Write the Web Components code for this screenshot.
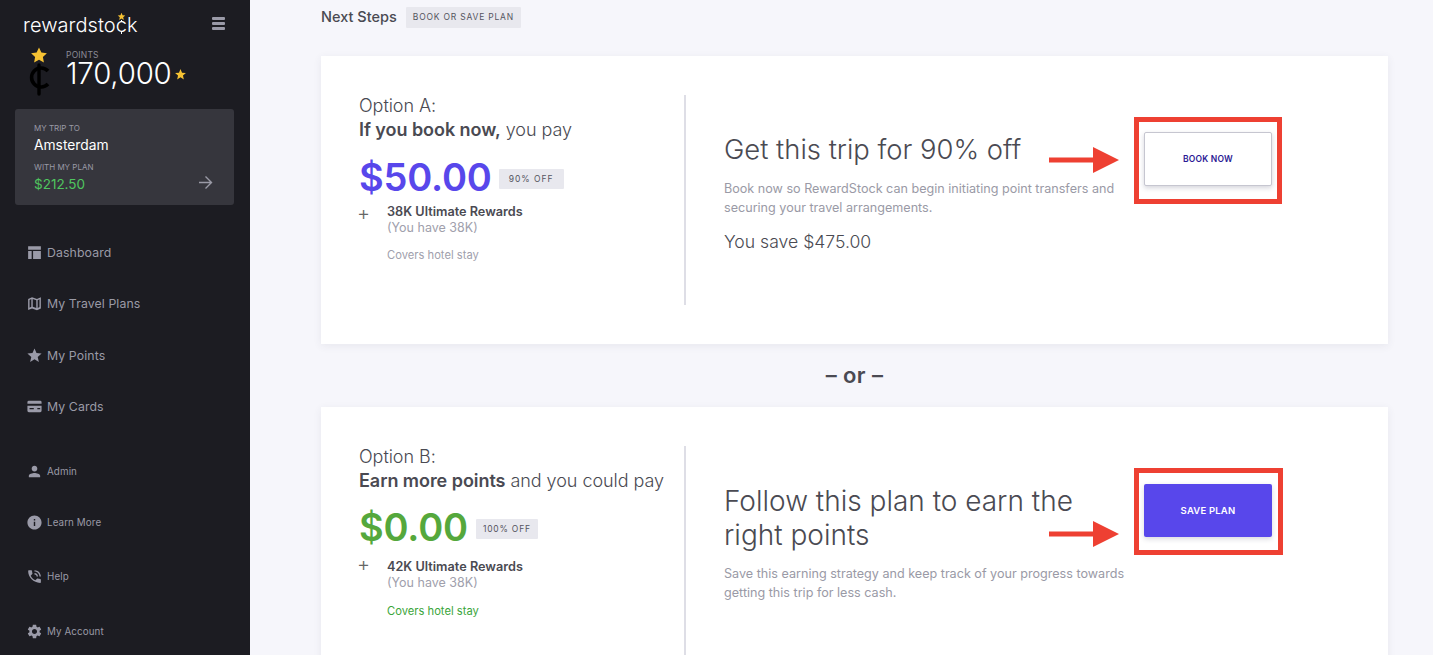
<!DOCTYPE html>
<html lang="en"><head><meta charset="utf-8"><title>RewardStock</title>
<style>
html,body{margin:0;padding:0;height:655px;overflow:hidden;background:#f6f6fb;font-family:Inter,"Noto Sans",sans-serif;}
</style></head><body>
<app-shell>
  <side-bar slot="side"></side-bar>
  <next-steps></next-steps>
  <option-card price="$50.00" off="90% OFF" tone="a" option="Option A:" lead="If you book now," rest=" you pay"
    reward="38K Ultimate Rewards" have="(You have 38K)" cover="Covers hotel stay"
    title-text="Get this trip for 90% off" desc="Book now so RewardStock can begin initiating point transfers and securing your travel arrangements."
    save="You save $475.00" cta="BOOK NOW"></option-card>
  <or-divider></or-divider>
  <option-card price="$0.00" off="100% OFF" tone="b" option="Option B:" lead="Earn more points" rest=" and you could pay"
    reward="42K Ultimate Rewards" have="(You have 38K)" cover="Covers hotel stay"
    title-text="Follow this plan to earn the right points" desc="Save this earning strategy and keep track of your progress towards getting this trip for less cash."
    cta="SAVE PLAN"></option-card>
</app-shell>
<script>
const STAR='M12 17.27L18.18 21l-1.64-7.03L22 9.24l-7.19-.61L12 2 9.19 8.63 2 9.24l5.46 4.73L5.82 21z';
const ICONS={
 dash:'<path d="M3 3h18v5H3zM3 10h5v11H3zM10 10h11v11H10z"/>',
 map:'<path fill-rule="evenodd" d="M3 5.500 8.500 3l7 2.500L21 3v16l-5.500 2.500-7-2.500L3 21zM5 7v11l2.500-1.300V5.700zM9.500 5.700v11l5 1.700V7.300zM16.500 7.300v11L19 17V6z"/>',
 star:`<path d="${STAR}"/>`,
 card:'<path fill-rule="evenodd" d="M4 4h16a2 2 0 0 1 2 2v2H2V6a2 2 0 0 1 2-2zM2 11h20v7a2 2 0 0 1-2 2H4a2 2 0 0 1-2-2zM5 14v2h6v-2zM16 14v2h4v-2z"/>',
 person:'<path d="M12 12c2.210 0 4-1.790 4-4s-1.790-4-4-4-4 1.790-4 4 1.790 4 4 4zm0 2c-2.670 0-8 1.340-8 4v2h16v-2c0-2.660-5.330-4-8-4z"/>',
 info:'<path d="M12 2C6.480 2 2 6.480 2 12s4.480 10 10 10 10-4.480 10-10S17.520 2 12 2zm1 15h-2v-6h2v6zm0-8h-2V7h2v2z"/>',
 phone:'<path d="M20 15.500c-1.250 0-2.450-.2-3.570-.57-.35-.11-.74-.03-1.020.24l-2.200 2.200c-2.830-1.440-5.150-3.750-6.590-6.590l2.200-2.210c.28-.26.36-.65.25-1C8.700 6.450 8.500 5.250 8.500 4c0-.55-.45-1-1-1H4c-.55 0-1 .45-1 1 0 9.390 7.610 17 17 17 .55 0 1-.45 1-1v-3.500c0-.55-.45-1-1-1zM19 12h2c0-4.970-4.030-9-9-9v2c3.870 0 7 3.130 7 7zm-4 0h2c0-2.760-2.240-5-5-5v2c1.660 0 3 1.340 3 3z"/>',
 gear:'<path d="M19.140 12.940c.04-.3.06-.61.06-.94 0-.32-.02-.64-.07-.94l2.030-1.580c.18-.14.23-.41.12-.61l-1.920-3.320c-.12-.22-.37-.29-.59-.22l-2.390.96c-.5-.38-1.030-.7-1.620-.94l-.36-2.540c-.04-.24-.24-.41-.48-.41h-3.840c-.24 0-.43.17-.47.41l-.36 2.540c-.59.24-1.130.57-1.620.94l-2.390-.96c-.22-.08-.47 0-.59.22L2.740 8.870c-.12.21-.08.47.12.61l2.030 1.580c-.05.3-.09.63-.09.94s.02.64.07.94l-2.030 1.580c-.18.14-.23.41-.12.61l1.920 3.320c.12.22.37.29.59.22l2.390-.96c.5.38 1.030.7 1.620.94l.36 2.540c.05.24.24.41.48.41h3.840c.24 0 .44-.17.47-.41l.36-2.540c.59-.24 1.130-.56 1.620-.94l2.390.96c.22.08.47 0 .59-.22l1.920-3.320c.12-.22.07-.47-.12-.61l-2.010-1.580zM12 15.600c-1.980 0-3.600-1.620-3.600-3.600s1.620-3.600 3.600-3.600 3.600 1.620 3.600 3.600-1.620 3.600-3.600 3.600z"/>'
};
function def(name,html){customElements.define(name,class extends HTMLElement{
  constructor(){super();this.attachShadow({mode:'open'});}
  connectedCallback(){this.shadowRoot.innerHTML=typeof html==='function'?html(this):html;}
});}
def('app-shell',`<style>
:host{display:flex;width:1433px;height:655px;overflow:hidden}
.side{flex:0 0 250px}
.main{flex:1;padding:0 45px 0 71px;min-width:0}
</style><div class="side"><slot name="side"></slot></div><div class="main"><slot></slot></div>`);

def('nav-item',h=>`<style>
:host{display:flex;align-items:center;gap:4px;color:#9a9aa6;font-size:var(--fs,12.300px);height:20px;letter-spacing:.1px}
svg{width:17px;height:17px;fill:#9a9aa8;flex:none}
</style><svg viewBox="0 0 24 24">${ICONS[h.getAttribute('icon')]}</svg><span>${h.textContent}</span>`);

def('side-bar',`<style>
:host{display:flex;flex-direction:column;width:250px;height:655px;background:#1c1c22;color:#fff;box-sizing:border-box;overflow:hidden}
.top{display:flex;justify-content:space-between;align-items:center;padding:14px 25px 0 23px;height:22px}
.logo{font-size:20px;font-weight:300;position:relative;letter-spacing:.05px;line-height:22px}
.lstar{position:absolute;left:93.500px;top:-2px;width:9px;height:9px;fill:#f6c233}
.tick{position:absolute;left:97.500px;width:1.200px;background:#fff}
.t-a{top:6px;height:2px}.t-b{top:17px;height:3px}
.burger{width:13px;height:13px;display:flex;flex-direction:column;justify-content:space-between;margin-top:-3px}
.burger i{display:block;height:3px;background:#9a9aa8;border-radius:1px}
.pts{display:flex;padding:11px 0 0 27px;height:52px}
.mark{width:24px;height:50px;margin-right:15px;flex:none}
.lab{font-size:8.500px;color:#8b8b96;letter-spacing:.2px;line-height:10px;margin-top:3px}
.val{font-size:29.400px;font-weight:300;line-height:28px;display:flex;align-items:center;gap:2px;letter-spacing:-.2px}
.val svg{width:13px;height:13px;fill:#f6c233}
.trip{margin:10px 16px 0 15px;height:96px;flex:none;background:#36363d;border-radius:3px;padding:14px 19px 0;box-sizing:border-box;position:relative}
.t1{font-size:8px;color:#9a9aa6;line-height:10px}
.t2{font-size:13.800px;line-height:16px;margin-top:4px}
.t3{margin-top:9px}
.t4{font-size:13.500px;color:#4fc55f;line-height:16px;margin-top:4px}
.arrow{position:absolute;right:21px;top:66px;width:15px;height:15px;fill:none;stroke:#9a9aa6;stroke-width:1.400}
.nav{padding:37px 0 0 26px;display:flex;flex-direction:column;gap:31.500px}
.nav2{padding:45px 0 0 26px;display:flex;flex-direction:column;--fs:9.800px}
.nav2 nav-item+nav-item{margin-top:34px}
.nav2 nav-item:nth-child(2){margin-top:31px}
.nav2 nav-item:nth-child(4){margin-top:35px}
</style>
<div class="top"><div class="logo">rewardstock<i class="tick t-a"></i><i class="tick t-b"></i><svg class="lstar" viewBox="0 0 24 24"><path d="${STAR}"/></svg></div><div class="burger"><i></i><i></i><i></i></div></div>
<div class="pts"><svg class="mark" viewBox="0 0 24 50"><path d="M12 0.500l2.400 5 5.500.7-4 3.800 1 5.400-4.900-2.700-4.900 2.700 1-5.400-4-3.800 5.500-.7z" fill="#f6c233"/><path d="M21 24a9.500 9.500 0 1 0 0 13" fill="none" stroke="#000" stroke-width="3.600"/><path d="M12 18v29" stroke="#000" stroke-width="3.400" stroke-linecap="round"/></svg>
<div><div class="lab">POINTS</div><div class="val">170,000<svg viewBox="0 0 24 24"><path d="${STAR}"/></svg></div></div></div>
<div class="trip"><div class="t1">MY TRIP TO</div><div class="t2">Amsterdam</div><div class="t1 t3">WITH MY PLAN</div><div class="t4">$212.50</div>
<svg class="arrow" viewBox="0 0 15 15"><path d="M1 7.500h12.500M7.500 1.500l6 6-6 6"/></svg></div>
<div class="nav"><nav-item icon="dash">Dashboard</nav-item><nav-item icon="map">My Travel Plans</nav-item><nav-item icon="star">My Points</nav-item><nav-item icon="card">My Cards</nav-item></div>
<div class="nav2"><nav-item icon="person">Admin</nav-item><nav-item icon="info">Learn More</nav-item><nav-item icon="phone">Help</nav-item><nav-item icon="gear">My Account</nav-item></div>`);

def('next-steps',`<style>
:host{display:flex;align-items:center;gap:9px;height:21px;padding-top:7px;margin-bottom:28px}
b{font-size:14.500px;font-weight:500;color:#4a4a52;position:relative;top:-1px}
span{background:#e8e8ee;color:#55555e;font-size:8.500px;letter-spacing:.8px;padding:0 7px;height:21px;line-height:21px;border-radius:1px}
</style><b>Next Steps</b><span>BOOK OR SAVE PLAN</span>`);

def('or-divider',`<style>
:host{display:block;height:63px;line-height:62px;text-align:center;font-size:22px;font-weight:600;color:#4a4a52;letter-spacing:.4px}
</style>– or –`);

def('option-card',h=>{
 const a=n=>h.getAttribute(n)||'';const b=a('tone')==='b';
 return `<style>
:host{display:block;background:#fff;height:288px;box-shadow:0 2px 8px rgba(60,60,90,.08);box-sizing:border-box}
.wrap{display:flex;padding-top:39px;height:100%;box-sizing:border-box}
.l{flex:none;height:210px;padding-left:38px;border-right:2px solid #dedee6;width:325px}
.op{font-size:18px;font-weight:300;color:#4a4a52;line-height:24px;margin-top:-1px;letter-spacing:-.05px}
.op b{font-weight:600}
.price{display:flex;align-items:center;gap:${b?'8px':'7px'};margin-top:${b?'10px':'11px'};height:48px}
.p{font-size:38px;font-weight:600;color:${b?'#55a83c':'#5847eb'};letter-spacing:-.2px}
.tag{background:#e8e8ee;color:#55555e;font-size:8.500px;letter-spacing:${b?'.8px':'1px'};padding:0 ${b?'7px':'10px'};height:20px;line-height:20px;margin-top:3px;border-radius:1px}
.rw{display:flex;margin-top:${b?'8px':'3px'}}
.plus{width:28px;font-size:20px;color:#666;font-weight:300;line-height:18px;margin-top:${b?'-4px':'0'};text-indent:-2px}
.rn{font-size:12.700px;font-weight:600;color:#4a4a52;line-height:15.500px}
.rh{font-size:12.500px;color:#a0a0ac;line-height:15px}
.cv{font-size:11.200px;color:${b?'#3aa53a':'#a0a0ac'};margin:${b?'14px':'13px'} 0 0 28px;line-height:14px}
.r{padding-left:38px;flex:1;display:flex;position:relative}
.rt{width:${b?'404px':'400px'};padding-top:${b?'38px':'37px'}}
.ti{font-size:${b?'28px':'27.400px'};font-weight:300;color:#4a4a52;line-height:34px}
.d{font-size:12.600px;color:#9a9aa6;line-height:19px;margin-top:${b?'12px':'13px'}}
.s{font-size:17.600px;font-weight:300;color:#4a4a52;margin-top:14px}
.box{position:absolute;left:448px;top:22px;width:${b?'149px':'148px'};height:87px;box-sizing:border-box;border:5px solid #ee4032}
.btn{position:absolute;left:458px;top:${b?'38px':'37px'};width:128px;height:${b?'53px':'54px'};box-sizing:border-box;border-radius:2px;display:flex;align-items:center;justify-content:center;font-size:${b?'9.500px':'8.500px'};font-weight:600;letter-spacing:.2px;
 ${b?'background:#5847eb;color:#fff;box-shadow:0 2px 5px rgba(60,60,90,.2)':'background:#fff;color:#2b1a94;border:1px solid #c6c6d0;box-shadow:0 2px 5px rgba(60,60,90,.22)'}}
.ar{position:absolute;left:363px;top:${b?'75px':'52px'};width:70px;height:26px;overflow:visible}
</style>
<div class="wrap"><div class="l"><div class="op">${a('option')}<br><b>${a('lead')}</b>${a('rest')}</div>
<div class="price"><span class="p">${a('price')}</span><span class="tag">${a('off')}</span></div>
<div class="rw"><span class="plus">+</span><div><div class="rn">${a('reward')}</div><div class="rh">${a('have')}</div></div></div>
<div class="cv">${a('cover')}</div></div>
<div class="r"><div class="rt"><div class="ti">${a('title-text')}</div><div class="d">${a('desc')}</div>${a('save')?`<div class="s">${a('save')}</div>`:''}</div>
<svg class="ar" viewBox="0 0 70 26"><path d="M0 10.500h44V0l26 13-26 13V15.500H0z" fill="#ee4032"/></svg>
<div class="box"></div><div class="btn">${a('cta')}</div></div></div>`;});
</script>
</body></html>
